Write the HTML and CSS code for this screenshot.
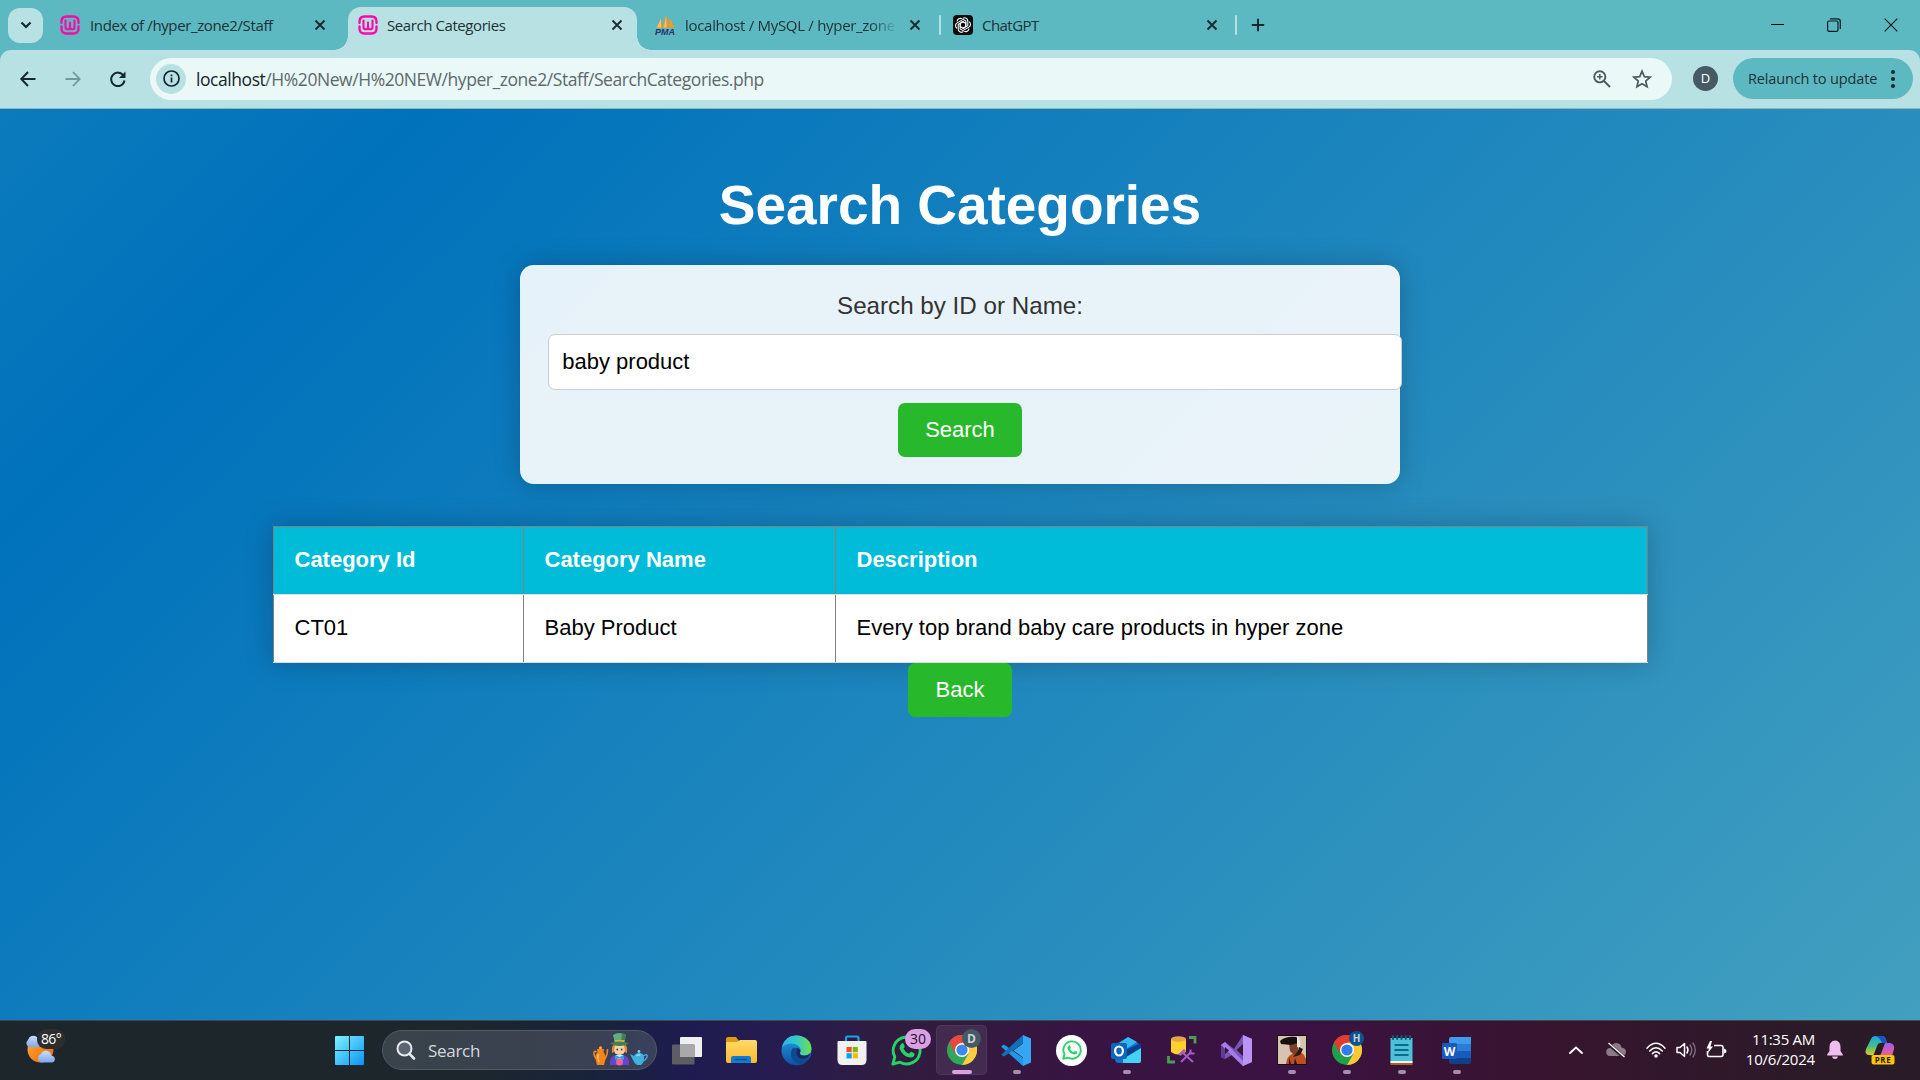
FILE: index.html
```html
<!DOCTYPE html>
<html lang="en">
<head>
<meta charset="utf-8">
<title>Search Categories</title>
<link rel="stylesheet" href="styles.css">
</head>
<body>
<svg class="defs" width="0" height="0" aria-hidden="true">
  <defs>
    <linearGradient id="win" x1="0" y1="0" x2="1" y2="1"><stop offset="0" stop-color="#7df4fd"/><stop offset="1" stop-color="#0a93f5"/></linearGradient>
    <linearGradient id="sun" x1="0" y1="0" x2="1" y2="1"><stop offset="0" stop-color="#fbb034"/><stop offset="1" stop-color="#f0600e"/></linearGradient>
    <linearGradient id="cloud" x1="0" y1="0" x2="0" y2="1"><stop offset="0" stop-color="#c9defc"/><stop offset="1" stop-color="#7ea6f0"/></linearGradient>
    <linearGradient id="folder" x1="0" y1="0" x2="0" y2="1"><stop offset="0" stop-color="#ffdb68"/><stop offset="1" stop-color="#fdb92c"/></linearGradient>
    <linearGradient id="edgeTop" x1="0" y1="0" x2="1" y2="0"><stop offset="0" stop-color="#2db1ee"/><stop offset=".5" stop-color="#35c9c6"/><stop offset="1" stop-color="#6fe04c"/></linearGradient>
    <linearGradient id="edgeSide" x1="0" y1="0" x2="0" y2="1"><stop offset="0" stop-color="#1ea0e6"/><stop offset="1" stop-color="#0f4fa3"/></linearGradient>
    <linearGradient id="copA" x1="0" y1="0" x2="0" y2="1"><stop offset="0" stop-color="#1aa3ee"/><stop offset=".5" stop-color="#3fbf86"/><stop offset="1" stop-color="#ecc81c"/></linearGradient>
    <linearGradient id="copB" x1="0" y1="0" x2="0" y2="1"><stop offset="0" stop-color="#a05cf0"/><stop offset="1" stop-color="#f2608a"/></linearGradient>
    <symbol id="wamp" viewBox="0 0 20 20"><g fill="none" stroke="#fb0aa6" stroke-linecap="round"><path d="M1.500 8V6.500Q1.500 1.500 6.500 1.500H13.500Q18.500 1.500 18.500 6.500V8M1.500 11.500V13.500Q1.500 18.500 6.500 18.500H13.500Q18.500 18.500 18.500 13.500V11.500" stroke-width="2.300"/><path d="M5.500 5.500V12Q5.500 14.300 7.700 14.300Q10 14.300 10 12V7.500M10 12Q10 14.300 12.300 14.300Q14.500 14.300 14.500 12V5.500" stroke-width="2.100"/></g></symbol>
    <symbol id="x" viewBox="0 0 12 12"><path d="M1.500 1.500L10.500 10.500M10.500 1.500L1.500 10.500" stroke="#1b2c30" stroke-width="1.900" fill="none"/></symbol>
    <symbol id="chrome" viewBox="0 0 30 30"><circle cx="15" cy="15" r="15" fill="#1fa04b"/><path d="M15 15L2 7.500A15 15 0 0 1 28 7.500H15Z" fill="#e33b2e"/><path d="M2 7.500L8.500 18.800L15 8H28A15 15 0 0 0 2 7.500Z" fill="#e33b2e"/><path d="M28 7.500H15L21.500 18.700L15 30A15 15 0 0 0 28 7.500Z" fill="#fcc934"/><circle cx="15" cy="15" r="7" fill="#fff"/><circle cx="15" cy="15" r="5.600" fill="#2f7de9"/></symbol>
    <symbol id="whatsapp" viewBox="0 0 30 30"><path d="M1.800 28.200L3.700 21.200A13 13 0 1 1 8.700 26.300Z" fill="none" stroke="#25d366" stroke-width="2.800" stroke-linejoin="round"/><path d="M10.200 8.200Q11.600 7.200 12.200 8.500L13.300 11.200Q13.300 12.200 12 13.400Q14 17 17.400 18.200L19 16.400Q19.800 16 22.800 17.800Q23.200 21.800 18.500 21.800Q11.500 21 8.300 13.300Q7.800 10.500 10.200 8.200Z" fill="#25d366"/></symbol>
  </defs>
</svg>

<header class="browser">
  <div class="tabstrip">
    <div class="tab-search"><svg width="12" height="8" viewBox="0 0 12 8"><path d="M1.500 1.500L6 6L10.500 1.500" fill="none" stroke="#15282c" stroke-width="2.200"/></svg></div>
    <div class="tab tab-one"><svg class="favicon"><use href="#wamp"/></svg><span class="tab-title t1">Index of /hyper_zone2/Staff</span><svg class="close"><use href="#x"/></svg></div>
    <div class="tab active"><svg class="favicon"><use href="#wamp"/></svg><span class="tab-title t2">Search Categories</span><svg class="close"><use href="#x"/></svg></div>
    <div class="tab tab-three">
      <svg class="favicon" viewBox="0 0 20 20"><path d="M1 13Q4 8 6 3L7 13ZM7.500 13L11 0Q14 8 13 13ZM13.500 13L15 3Q18 8 19 13Z" fill="#f79a1c"/><path d="M2 12.500L6 4L6 12.500ZM9 12.500L11 2L11.500 12.500Z" fill="#fcc36a"/><text x="0" y="19.500" class="pma">PMA</text></svg>
      <span class="tab-title fade t3">localhost / MySQL / hyper_zone</span><svg class="close"><use href="#x"/></svg></div>
    <i class="sep"></i>
    <div class="tab tab-four">
      <svg class="favicon" viewBox="0 0 20 20"><rect width="20" height="20" rx="4" fill="#0b0b0b"/><g fill="none" stroke="#fff" stroke-width="1.050"><path id="petal" d="M10 3.200A3.200 3.200 0 0 1 14.800 6V10.600L10 13.200L7.200 11.600"/><use href="#petal" transform="rotate(60 10 10)"/><use href="#petal" transform="rotate(120 10 10)"/><use href="#petal" transform="rotate(180 10 10)"/><use href="#petal" transform="rotate(240 10 10)"/><use href="#petal" transform="rotate(300 10 10)"/></g></svg>
      <span class="tab-title t4">ChatGPT</span><svg class="close"><use href="#x"/></svg></div>
    <i class="sep"></i>
    <svg class="plus" width="14" height="14" viewBox="0 0 14 14"><path d="M7 .8V13.200M.8 7H13.200" stroke="#15282c" stroke-width="2"/></svg>
    <div class="window-controls">
      <svg width="13" height="13" viewBox="0 0 13 13"><path d="M0 6.500H13" stroke="#000" stroke-width="1"/></svg>
      <svg width="14" height="14" viewBox="0 0 14 14" fill="none" stroke="#0a1c20" stroke-width="1.200"><rect x=".6" y="3" width="10.400" height="10.400" rx="1.500"/><path d="M3 .9H10.500Q13.300 .9 13.300 3.500V11"/></svg>
      <svg width="14" height="14" viewBox="0 0 14 14"><path d="M.7 .7L13.300 13.300M13.300 .7L.7 13.300" stroke="#0a1c20" stroke-width="1.200"/></svg>
    </div>
  </div>
  <div class="toolbar">
    <svg class="nav" width="16" height="16" viewBox="0 0 16 16"><path d="M8 1L1.300 8L8 15M1.300 8H15.500" fill="none" stroke="#15282c" stroke-width="2"/></svg>
    <svg class="nav" width="16" height="16" viewBox="0 0 16 16"><path d="M8 1L14.700 8L8 15M14.700 8H.5" fill="none" stroke="#71969b" stroke-width="1.800"/></svg>
    <svg class="nav" width="16" height="16" viewBox="0 0 16 16"><path d="M13.600 4.800A6.700 6.700 0 1 0 14.500 9.500" fill="none" stroke="#15282c" stroke-width="2"/><path d="M15.500 .5V7H9Z" fill="#15282c"/></svg>
    <div class="omnibox">
      <span class="info"><svg width="17" height="17" viewBox="0 0 17 17"><circle cx="8.500" cy="8.500" r="7.500" fill="none" stroke="#15282c" stroke-width="1.700"/><path d="M8.500 7.500V12.500M8.500 4.500V6.200" stroke="#15282c" stroke-width="1.700"/></svg></span>
      <span class="url"><b>localhost</b>/H%20New/H%20NEW/hyper_zone2/Staff/SearchCategories.php</span>
      <svg width="18" height="18" viewBox="0 0 18 18" fill="none" stroke="#4a5c5f" stroke-width="1.900"><circle cx="6.800" cy="6.800" r="5.600"/><path d="M11 11L17 17"/><path d="M4 6.800H9.600M6.800 4V9.600" stroke-width="1.500"/></svg>
      <svg class="star" width="20" height="20" viewBox="0 0 20 20"><path d="M10 2.200L12.300 7.600L18.200 8.100L13.700 12L15.100 17.800L10 14.700L4.900 17.800L6.300 12L1.800 8.100L7.700 7.600Z" fill="none" stroke="#4a5c5f" stroke-width="1.700"/></svg>
    </div>
    <span class="avatar">D</span>
    <div class="relaunch"><span>Relaunch to update</span><svg width="4" height="18" viewBox="0 0 4 18" fill="#15282c"><circle cx="2" cy="2" r="2"/><circle cx="2" cy="9" r="2"/><circle cx="2" cy="16" r="2"/></svg></div>
  </div>
</header>

<main class="page">
  <h1>Search Categories</h1>
  <form class="search-form">
    <label for="q">Search by ID or Name:</label>
    <input id="q" type="text" value="baby product">
    <button type="button" class="btn">Search</button>
  </form>
  <table class="results">
    <colgroup><col class="c-id"><col class="c-name"><col></colgroup>
    <tr><th>Category Id</th><th>Category Name</th><th>Description</th></tr>
    <tr><td>CT01</td><td>Baby Product</td><td>Every top brand baby care products in hyper zone</td></tr>
  </table>
  <a class="btn">Back</a>
</main>

<footer class="taskbar">
  <div class="weather">
    <svg width="31" height="30" viewBox="0 0 31 30"><circle cx="15.500" cy="14.500" r="13" fill="url(#sun)"/><path d="M4 12A4 4 0 0 1 3 5Q5 0 10 1Q14 2 14 12Z" fill="url(#cloud)"/><path d="M16 27.500A4.500 4.500 0 0 1 16 19Q18 15 22.500 16Q26 17 26.500 20.500Q30.500 21.500 29.800 25Q29 27.500 27 27.500Z" fill="url(#cloud)"/></svg>
    <span class="temp">86°</span>
  </div>
  <svg class="start" width="29" height="29" viewBox="0 0 29 29" fill="url(#win)"><path d="M0 1Q0 0 1 0H14V14H0ZM15 0H28Q29 0 29 1V14H15ZM0 15H14V29H1Q0 29 0 28ZM15 15H29V28Q29 29 28 29H15Z"/></svg>
  <div class="search-pill">
    <svg width="20" height="20" viewBox="0 0 20 20"><circle cx="8.500" cy="8.500" r="7" fill="#5b6671" stroke="#e8ebee" stroke-width="2"/><path d="M13.500 13.800L18 18.500" stroke="#e8ebee" stroke-width="2.600" stroke-linecap="round"/></svg>
    <span>Search</span>
    <svg class="hatter" width="56" height="32" viewBox="0 0 56 32">
      <path d="M4.500 18Q1.500 16 2 20Q3 24 5 25M13 25Q16 20 15.500 15" fill="none" stroke="#f58a1c" stroke-width="1.600"/><path d="M5 15H12L11.500 18Q14.500 22 13 27L12 31H5L4 27Q2.500 22 5.500 18Z" fill="#f7861a"/><path d="M6 20Q5 24 7 28" stroke="#ffc160" stroke-width="1.500" fill="none"/><circle cx="8.500" cy="13.800" r="1.500" fill="#ffb347"/>
      <path d="M18 31Q17 22 24 21H31Q38 22 37 31Z" fill="#6a44c8"/><path d="M24 21H31L29 31H26Z" fill="#d9eefb"/><path d="M23 21L27.500 23L32 21V26L27.500 24L23 26Z" fill="#25a5e8"/><circle cx="27.500" cy="28" r="3.500" fill="#f0609a"/>
      <circle cx="27.500" cy="15" r="6" fill="#f7cfa8"/><path d="M20 19Q19 11 23 10L22 18ZM35 19Q36 11 32 10L33 18Z" fill="#e08a35"/><circle cx="25.300" cy="15.500" r=".9" fill="#314b34"/><circle cx="29.700" cy="15.500" r=".9" fill="#314b34"/>
      <path d="M21 1Q27 -3 34 1L32 9H23Z" fill="#5fae7c"/><path d="M30 -1L34 1L32 9H29Z" fill="#3c8055"/><path d="M22.500 6H32.700L32 9H23Z" fill="#d9a94a"/><path d="M18 9Q27 6 37 9Q34 12 27.500 12Q21 12 18 9Z" fill="#3c8055"/>
      <path d="M51 22Q56 19 55 23Q54 26 51 27" fill="none" stroke="#3fa6df" stroke-width="1.500"/><path d="M38 20L42 22Q43 19 47 19Q52 19 52 24Q52 29 49 31H45Q42 29 41 26Z" fill="#3fb0df"/><circle cx="47" cy="17.500" r="1.400" fill="#7cd3f1"/><path d="M44.500 22Q46 20.500 48.500 21" stroke="#9be2f8" stroke-width="1.300" fill="none"/>
    </svg>
  </div>
  <ul class="apps">
    <li><svg width="30" height="30" viewBox="0 0 30 30"><rect x="8" y="2" width="22" height="20" rx="1" fill="#f0f0f0"/><rect x="0" y="9.500" width="22.500" height="20" rx="1" fill="#5d5d63"/><rect x="8" y="9.500" width="14.500" height="12.500" fill="#a9a9ac"/></svg></li>
    <li><svg width="31" height="30" viewBox="0 0 31 30"><path d="M0 4Q0 2 2 2H10L13 6H29V12H0Z" fill="#e39a12"/><path d="M0 8Q0 7 1 7H11L14 5H29Q31 5 31 7V26Q31 28 29 28H2Q0 28 0 26Z" fill="url(#folder)"/><path d="M5 28V23Q5 21 7 21H23Q25 21 25 23V28Z" fill="#0f7cd2"/><path d="M9 24.500H21" stroke="#0b4f96" stroke-width="1.500"/></svg></li>
    <li><svg width="31" height="31" viewBox="0 0 31 31"><circle cx="15.500" cy="15.500" r="15" fill="url(#edgeSide)"/><path d="M1 12Q4 0 16 .5Q30 2 30.500 14Q30 20 23 20.500Q18 20 19 17.500Q21 14 17 10.500Q9 6 1 12Z" fill="url(#edgeTop)"/><path d="M11 14Q7 25 19 29.500Q26 27.500 29 22Q22 25.500 17.500 22Q13.500 18 16 13Q12.500 12 11 14Z" fill="#0d4a8f"/><path d="M17.300 22.200Q13.300 18.500 16.500 12.800Q20.800 15 18.900 18Q18.700 20.500 23.500 20.700Q27.500 20.500 29.500 18Q28.500 21.500 26.500 22.800Q20.500 25 17.300 22.200Z" fill="#1f2463"/></svg></li>
    <li><svg width="30" height="30" viewBox="0 0 30 30"><path d="M9 7V3Q9 1.500 10.500 1.500H20Q21.500 1.500 21.500 3V7" fill="none" stroke="#1ba1e8" stroke-width="2.200"/><path d="M.5 7Q.5 6 1.500 6H28.500Q29.500 6 29.500 7V25Q29.500 30 24.500 30H5.500Q.5 30 .5 25Z" fill="#f1f1f1"/><path d="M9.500 12H14.700V17.200H9.500Z" fill="#f25022"/><path d="M15.700 12H20.900V17.200H15.700Z" fill="#7fba00"/><path d="M9.500 18.200H14.700V23.400H9.500Z" fill="#00a4ef"/><path d="M15.700 18.200H20.900V23.400H15.700Z" fill="#ffb900"/></svg></li>
    <li><svg width="31" height="31"><use href="#whatsapp"/></svg><span class="count">30</span></li>
    <li class="current"><svg width="30" height="30"><use href="#chrome"/></svg><span class="profile">D</span></li>
    <li class="open"><svg width="31" height="31" viewBox="0 0 31 31"><path d="M22 0L30 3.500V27.500L22 31V22.500L12.500 15.500L22 8.500Z" fill="#35a7f2"/><path d="M.5 11L3 9.500L22 23V31L.5 12Z" fill="#2196e3"/><path d="M.5 19.500L22 0V8.500L3 21.500L.5 20Z" fill="#1470b4"/></svg></li>
    <li><span class="disc"><svg width="20" height="20"><use href="#whatsapp"/></svg></span></li>
    <li class="open"><svg width="31" height="30" viewBox="0 0 31 30"><path d="M4 10L17 2L30 10V26Q30 28 28 28H8Q4 28 4 24Z" fill="#1372c8"/><path d="M8 8L17 2L26 7L12 16Z" fill="#35b8f1"/><path d="M12 16L30 8V14L16 22Z" fill="#0b3f8c"/><path d="M12 24L30 13V26Q30 28 28 28H12Z" fill="#45d3f3"/><rect x="0" y="8" width="16" height="16" rx="2" fill="#0b67bd"/><ellipse cx="8" cy="16" rx="3.900" ry="4.500" fill="none" stroke="#fff" stroke-width="2.200"/></svg></li>
    <li><svg width="30" height="30" viewBox="0 0 30 30"><path d="M4 4V17Q11 22 19 17V4Z" fill="#fbd02f"/><ellipse cx="11.500" cy="4" rx="7.500" ry="2.800" fill="#e3a443"/><path d="M22 2.500H28V8.500M1.500 21V27H8" fill="none" stroke="#4b9d52" stroke-width="2.800"/><path d="M14 27L24 17M16 18L26 27" stroke="#a65bc6" stroke-width="2" fill="none"/><path d="M12.500 20L18 15" stroke="#a65bc6" stroke-width="3"/><path d="M23.500 14.500L23.500 18.500L27.500 18.500" stroke="#a65bc6" stroke-width="2" fill="none"/></svg></li>
    <li><svg width="31" height="31" viewBox="0 0 31 31"><path d="M0 10L4 7L13 14L22 0L31 4V27L22 31L11 20L4 24L0 22Z" fill="#7a55b8"/><path d="M0 10L4 7V24L0 22Z" fill="#5b3d98"/><path d="M4 7L22 26V31L0 10Z" fill="#a77be8"/><path d="M22 0L31 4V27L22 31Z" fill="#bb93f5"/><path d="M22 9V21L15.500 15ZM4 12V19L8 15.500Z" fill="#391642"/></svg></li>
    <li class="open"><svg width="30" height="30" viewBox="0 0 30 30"><path d="M0 0H30V30H0Z" fill="#171010"/><path d="M1 1H29V29H1Z" fill="#d8c3b1"/><path d="M9 29Q10 21 15 19L24 17Q28 20 29 24V29Z" fill="#bc4f1f"/><path d="M12 8H21V17L17 20L13 16Z" fill="#7d4129"/><path d="M3 6Q9 1 19 2Q22 3 21 8L14 10L4 9Z" fill="#171010"/><path d="M20 1Q25 5 23 13L20 12Z" fill="#eee6d8"/><path d="M22 12L26 14L23 20L16 22L21 16ZM12 22L14 29H12ZM18 23L20 29H17Z" fill="#2a1712"/></svg></li>
    <li class="open"><svg width="30" height="30"><use href="#chrome"/></svg><span class="profile blue">H</span></li>
    <li class="open"><svg width="23" height="31" viewBox="0 0 23 31"><path d="M.5 3H22.500V28H.5Z" fill="#4fc0d9"/><path d="M.5 26H22.500V28H.5Z" fill="#e8f4f5"/><path d="M.5 28H22.500V30H.5Z" fill="#b26217"/><path d="M3 1V4M7.200 1V4M11.500 1V4M15.800 1V4M20 1V4" stroke="#0f5c7a" stroke-width="2" stroke-linecap="round"/><path d="M4.500 10H18.500M4.500 15H18.500M4.500 20H18.500" stroke="#0c6c88" stroke-width="1.800"/></svg></li>
    <li class="open"><svg width="29" height="29" viewBox="0 0 29 29"><path d="M7 3Q7 1 9 1H29V8H7Z" fill="#3f9bec"/><path d="M7 8H29V15H7Z" fill="#2b7cd3"/><path d="M7 15H29V22H7Z" fill="#195abd"/><path d="M7 22H29V26Q29 28 27 28H9Q7 28 7 26Z" fill="#123f8a"/><rect x="0" y="7" width="15" height="16" rx="1.500" fill="#185abd"/><text x="7.500" y="19.500" class="word">W</text></svg></li>
  </ul>
  <div class="tray">
    <svg width="14" height="8" viewBox="0 0 14 8"><path d="M1 7L7 1.500L13 7" fill="none" stroke="#fff" stroke-width="1.900" stroke-linecap="round"/></svg>
    <svg class="t-cloud" width="20" height="16" viewBox="0 0 20 16"><path d="M4 14A4 4 0 0 1 4.500 6Q6 1 10.500 1Q15 1.500 15.500 5.500Q20 6 20 10Q19.500 14 16 14Z" fill="#8c7a89"/><path d="M2 1.500L18 15.500" stroke="#301a2c" stroke-width="3.500"/><path d="M2.500 1L18.500 15" stroke="#fff" stroke-width="1.300"/></svg>
    <svg class="t-wifi" width="20" height="16" viewBox="0 0 20 16"><g fill="none" stroke="#fff" stroke-width="1.500" stroke-linecap="round"><path d="M1 6.200Q10 -3.500 19 6.200M3.700 9Q10 2.500 16.300 9M6.400 11.600Q10 8 13.600 11.600"/></g><circle cx="10" cy="14" r="1.800" fill="#fff"/></svg>
    <svg class="t-snd" width="21" height="18" viewBox="0 0 21 18" fill="none" stroke-linecap="round"><path d="M1 6.500H4L8.500 2.500V15.500L4 11.500H1Z" stroke="#fff" stroke-width="1.500" stroke-linejoin="round"/><path d="M11 6Q13 9 11 12" stroke="#fff" stroke-width="1.500"/><path d="M14 4Q17.500 9 14 14M17 2Q21.500 9 17 16" stroke="#7c6b79" stroke-width="1.400"/></svg>
    <svg class="t-bat" width="21" height="18" viewBox="0 0 21 18"><path d="M8 4.500H15Q17 4.500 17 6.500V13.500Q17 15.500 15 15.500H3Q1.500 15.500 1.500 13.500V10" fill="none" stroke="#fff" stroke-width="1.600"/><path d="M18 7.500Q20.500 8 20.500 10Q20.500 12 18 12.500ZM4 0L.5 7.500H3L1.500 12.500L7 5.500H4.500L6 0Z" fill="#fff"/></svg>
    <div class="clock"><span class="time">11:35 AM</span><span class="date">10/6/2024</span></div>
    <svg class="bell" width="16" height="20" viewBox="0 0 16 20"><path d="M8 .5Q13.500 1 13.500 7V11L15.800 14.500V15.500H.2V14.500L2.500 11V7Q2.500 1 8 .5ZM5 16.500H11Q10.500 19 8 19Q5.500 19 5 16.500Z" fill="#efbdf0"/></svg>
    <svg class="copilot" width="30" height="30" viewBox="0 0 30 30"><path d="M6 4Q7 1 11 1H17Q20 1 21 5L22 8H15Q13 8 12 11L9 19Q8 21 5 20Q-1 20 1 14Z" fill="url(#copA)"/><path d="M11 1H17Q20 1 21 5L22 8H17Q15 3 11 1Z" fill="#1b54c8"/><path d="M20 8H25Q30 9 29 14L27 21H12Q16 21 17 16Z" fill="url(#copB)"/><rect x="6.500" y="20" width="23" height="9.500" rx="2" fill="#fdc40a"/><text x="18" y="27.800" class="pre">PRE</text></svg>
  </div>
</footer>
</body>
</html>
```
FILE: styles.css
```css
* { box-sizing: border-box; }
html, body { margin: 0; height: 100%; }
body {
  width: 1920px;
  height: 1080px;
  overflow: hidden;
  display: flex;
  flex-direction: column;
  font-family: "Liberation Sans", Arial, sans-serif;
}
svg { display: block; flex: none; overflow: visible; }
.defs { position: absolute; }

/* Browser chrome */
.browser {
  height: 109px;
  flex: none;
  background: #5cb8c1;
  font-family: "Open Sans", "Noto Sans", sans-serif;
  color: #1d3236;
}
.tabstrip { height: 50px; display: flex; align-items: center; padding-left: 8px; }
.tab-search {
  width: 35px; height: 35px;
  border-radius: 12px;
  background: #b8e1e4;
  display: flex; align-items: center; justify-content: center;
}
.tab { display: flex; align-items: center; height: 50px; flex: none; }
.tab-one { width: 305px; padding: 0 22px 0 17px; }
.active {
  position: relative;
  width: 289px; height: 43px;
  margin-top: 7px;
  padding: 0 14px 7px 10px;
  background: #b8e1e4;
  border-radius: 13px 13px 0 0;
}
.active::before, .active::after {
  content: "";
  position: absolute;
  bottom: 0;
  width: 14px; height: 14px;
}
.active::before { left: -14px; background: radial-gradient(circle at 0 0, transparent 13.5px, #b8e1e4 14px); }
.active::after { right: -14px; background: radial-gradient(circle at 100% 0, transparent 13.5px, #b8e1e4 14px); }
.tab-three { width: 302px; padding: 0 18px; }
.tab-four { width: 294px; padding: 0 17px 0 12px; }
.favicon { width: 20px; height: 20px; margin-right: 10px; }
.close { width: 12px; height: 12px; margin-left: auto; }
.tab-title { font-size: 15px; white-space: nowrap; line-height: 24px; padding-bottom: 1px; }
.t1 { letter-spacing: -.38px; }
.t2 { letter-spacing: -.42px; margin-left: -1px; }
.t3 { letter-spacing: -.3px; }
.t4 { letter-spacing: -.55px; margin-left: -1px; }
.fade { -webkit-mask-image: linear-gradient(90deg, #000 88%, transparent 101%); mask-image: linear-gradient(90deg, #000 88%, transparent 101%); }
.pma { font: italic bold 9px "Liberation Sans", sans-serif; fill: #2c2f6e; }
.sep { width: 2px; height: 20px; background: #b8e1e4; border-radius: 1px; flex: none; }
.plus { margin-left: 14px; }
.window-controls { margin-left: auto; display: flex; gap: 43px; padding-right: 22px; }

.toolbar {
  height: 59px;
  display: flex; align-items: center;
  padding: 0 8px 1px 20px;
  background: #b8e1e4;
  border-radius: 11px 11px 0 0;
  border-bottom: 1px solid #93b8ba;
}
.nav { margin-right: 29px; }
.nav:nth-child(3) { margin-right: 24px; }
.omnibox {
  flex: none;
  width: 1522px; height: 42px;
  border-radius: 21px;
  background: #ebf8f8;
  display: flex; align-items: center;
  padding: 0 20px 0 6px;
}
.info {
  width: 30px; height: 30px;
  border-radius: 50%;
  background: #b8e1e4;
  display: flex; align-items: center; justify-content: center;
}
.url { margin: 0 auto 0 10px; font-size: 17.500px; letter-spacing: -.44px; color: #5d696b; }
.url b { font-weight: 400; color: #14262a; }
.star { margin-left: 21px; }
.avatar {
  flex: none;
  width: 25px; height: 25px;
  margin-left: 21px;
  border-radius: 50%;
  background: #455a64;
  color: #fff;
  font-size: 13px; line-height: 25px; text-align: center;
}
.relaunch {
  flex: none;
  width: 180px; height: 41px;
  margin-left: 15px;
  padding: 0 18px 0 15px;
  border-radius: 21px;
  background: #5cb8c1;
  display: flex; align-items: center; justify-content: space-between;
  font-size: 14.500px; letter-spacing: -.15px; white-space: nowrap;
}

/* Page */
.page {
  flex: 1;
  display: flex; flex-direction: column; align-items: center;
  padding-top: 64px;
  background: linear-gradient(135deg, #0b7bbc 0%, #0072bc 15%, #429fbf 100%);
}
h1 { margin: 0 0 28px; font-size: 55px; line-height: 64px; color: #fff; letter-spacing: -.04px; }
.search-form {
  width: 880px; height: 219px;
  padding: 26.500px 27.500px 27.500px;
  border-radius: 13.750px;
  background: rgba(255, 255, 255, .9);
  box-shadow: 0 0 27px rgba(0, 0, 0, .22);
  display: flex; flex-direction: column; align-items: center;
}
label { font-size: 24.200px; line-height: 27px; color: #333; margin-bottom: 15px; }
input {
  align-self: flex-start;
  flex: none;
  width: 854px; height: 56px;
  margin-bottom: 13px;
  padding: 0 13.750px;
  border: 1px solid #ccc;
  border-radius: 7px;
  background: #fff;
  color: #000;
  font: 22px "Liberation Sans", Arial, sans-serif;
}
.btn {
  flex: none;
  height: 54px;
  padding: 0 27.500px;
  border: 0;
  border-radius: 7px;
  background: #28b82c;
  color: #fff;
  font: 22px/53px "Liberation Sans", Arial, sans-serif;
}
.results {
  width: 1375px; height: 137px;
  margin-top: 42px;
  border-collapse: collapse;
  table-layout: fixed;
  background: #fff;
  box-shadow: 0 0 27px rgba(0, 0, 0, .22);
  font-size: 22px;
  text-align: left;
}
.c-id { width: 250px; }
.c-name { width: 312px; }
th, td { height: 68px; padding: 0 20.600px 2px 21px; border: 1px solid gray; border-bottom-color: #ddd; }
th { background: #00bcd8; color: #fff; }

/* Taskbar */
.taskbar {
  height: 60px;
  flex: none;
  display: flex; align-items: center;
  padding-bottom: 1px;
  border-top: 1px solid #45454c;
  background: linear-gradient(90deg, #1d262a 0, #1c262c 470px, #18233c 600px, #1f1b50 690px, #261c50 780px, #311c3f 900px, #381442 1080px, #3b1242 1300px, #38142f 1540px, #2b1a28 1800px, #2a1b29 100%);
  font-family: "Open Sans", "Noto Sans", sans-serif;
  color: #fff;
}
.weather { position: relative; margin-left: 25px; width: 310px; }
.temp {
  position: absolute; left: 12px; top: -6px;
  width: 28px; height: 20px;
  border-radius: 9px;
  background: #2d2d2d;
  font: 14px/20px "Open Sans", sans-serif;
  letter-spacing: -.6px;
  text-align: center;
}
.search-pill {
  width: 275px; height: 40px;
  margin-left: 18px;
  padding: 0 8px 0 13px;
  border: 1px solid #515a64;
  border-radius: 20px;
  background: linear-gradient(90deg, #38434a, #3a4151 70%, #38405d);
  display: flex; align-items: center;
  color: #d5d9dd;
  font-size: 17px; letter-spacing: -.3px;
}
.search-pill span { margin-left: 12px; }
.hatter { margin-left: auto; }
.apps { list-style: none; margin: 0 0 0 2px; padding: 0; display: flex; }
.apps li {
  position: relative;
  width: 55px; height: 50px;
  display: flex; align-items: center; justify-content: center;
}
.open::after, .current::after {
  content: "";
  position: absolute;
  bottom: 1px; left: 24px;
  width: 8px; height: 4px;
  border-radius: 2px;
  background: #a391a8;
}
.current::before {
  content: "";
  position: absolute;
  inset: 0 2px;
  border-radius: 5px;
  background: rgba(255, 255, 255, .08);
  border: 1px solid rgba(255, 255, 255, .06);
}
.current::after { width: 20px; left: 18px; background: #dca0e2; }
.count {
  position: absolute; top: 4px; left: 26px;
  width: 26px; height: 20px;
  border-radius: 10px;
  background: #dba0e3;
  color: #22122a;
  font-size: 14px; line-height: 20px; text-align: center;
}
.profile {
  position: absolute; top: 4px; left: 28px;
  width: 19px; height: 19px;
  border-radius: 50%;
  background: #455a64;
  color: #c6d3d8;
  font: bold 12px/19px "Open Sans", sans-serif;
  text-align: center;
}
.blue { background: #0b5394; font-size: 10px; width: 15px; height: 15px; line-height: 15px; left: 30px; top: 6px; }
.disc { width: 31px; height: 31px; border-radius: 50%; background: #fff; display: flex; align-items: center; justify-content: center; }
.word { font: bold 12px "Open Sans", sans-serif; fill: #fff; text-anchor: middle; }
.pre { font: bold 8px "Open Sans", sans-serif; fill: #241c02; text-anchor: middle; letter-spacing: .5px; }
.tray { margin-left: auto; display: flex; align-items: center; padding-right: 25px; }
.t-cloud { margin-left: 23px; }
.t-wifi { margin-left: 20px; }
.t-snd { margin-left: 10px; }
.t-bat { margin-left: 9px; }
.clock { width: 88px; display: flex; flex-direction: column; align-items: flex-end; font-size: 15px; line-height: 20px; padding-bottom: 2px; white-space: nowrap; }
.time { letter-spacing: -.28px; }
.date { letter-spacing: -.2px; }
.bell { margin-left: 12px; }
.copilot { margin-left: 22px; }
```
